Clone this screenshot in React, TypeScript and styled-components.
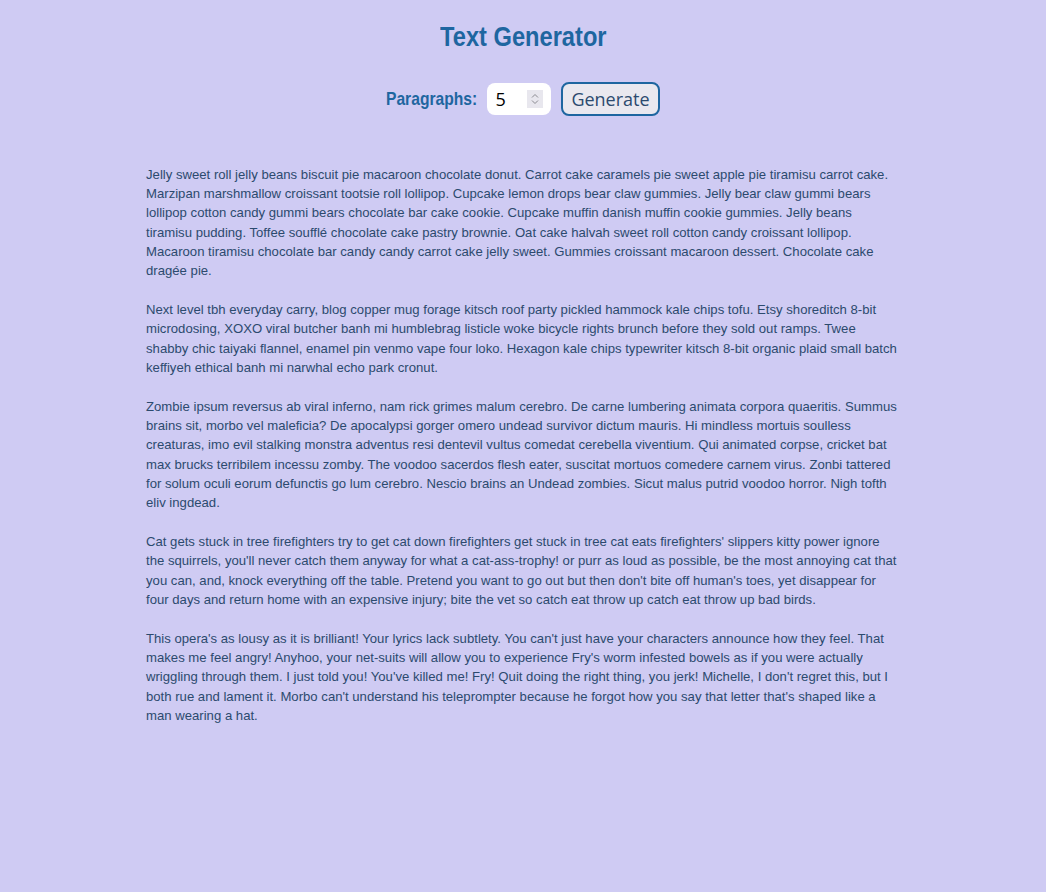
import React, { useState } from "react";
import styled, { createGlobalStyle } from "styled-components";

const Global = createGlobalStyle`
  html, body { margin: 0; padding: 0; background: #cfcbf3; }
  body { font-family: "Liberation Sans", Arial, sans-serif; }
`;

const Page = styled.div`
  min-height: 892px;
  background: #cfcbf3;
  display: flex;
  flex-direction: column;
  align-items: center;
  padding-top: 19px;
  box-sizing: border-box;
`;

const Title = styled.h1`
  font-family: "Liberation Sans", Arial, sans-serif;
  font-weight: 700;
  font-size: 28.5px;
  color: #1e66a0;
  margin: 0;
  line-height: 34px;
  display: inline-block;
  transform: scaleX(0.83);
`;

const Controls = styled.div`
  display: flex;
  align-items: center;
  gap: 10px;
  margin-top: 29px;
`;

const Label = styled.label`
  font-family: "Liberation Sans", Arial, sans-serif;
  font-weight: 700;
  font-size: 18.5px;
  color: #1e66a0;
  display: inline-block;
  width: 91px;
  white-space: nowrap;
  transform: scaleX(0.845);
  transform-origin: left center;
`;

const InputWrap = styled.div`
  position: relative;
  width: 64px;
  height: 32px;
`;

const NumberInput = styled.input`
  width: 64px;
  height: 32px;
  box-sizing: border-box;
  border: none;
  border-radius: 8px;
  background: #fff;
  padding: 0 8px;
  font-family: "Open Sans", "Noto Sans", sans-serif;
  font-size: 18px;
  color: #000;
  outline: none;
  -moz-appearance: textfield;
  &::-webkit-inner-spin-button,
  &::-webkit-outer-spin-button {
    -webkit-appearance: none;
    margin: 0;
  }
`;

const Spinner = styled.div`
  position: absolute;
  right: 8px;
  top: 7px;
  width: 16px;
  height: 18px;
  background: #e8e7ee;
  display: flex;
  flex-direction: column;
  align-items: center;
  justify-content: center;
  gap: 2px;
  pointer-events: none;
`;

const Button = styled.button`
  height: 34px;
  box-sizing: border-box;
  padding: 0 8px;
  border: 2px solid #1e66a0;
  border-radius: 8px;
  background: #e9e8ef;
  color: #2c4a6e;
  font-family: "Open Sans", "Noto Sans", sans-serif;
  font-size: 18px;
  cursor: pointer;
`;

const TextBlock = styled.div`
  width: 754px;
  margin-top: 49px;
`;

const Para = styled.p`
  font-family: "Liberation Sans", Arial, sans-serif;
  font-size: 13.15px;
  line-height: 19.2px;
  color: #2c4a6e;
  margin: 0 0 20px 0;
`;

const paragraphs = [
  "Jelly sweet roll jelly beans biscuit pie macaroon chocolate donut. Carrot cake caramels pie sweet apple pie tiramisu carrot cake. Marzipan marshmallow croissant tootsie roll lollipop. Cupcake lemon drops bear claw gummies. Jelly bear claw gummi bears lollipop cotton candy gummi bears chocolate bar cake cookie. Cupcake muffin danish muffin cookie gummies. Jelly beans tiramisu pudding. Toffee soufflé chocolate cake pastry brownie. Oat cake halvah sweet roll cotton candy croissant lollipop. Macaroon tiramisu chocolate bar candy candy carrot cake jelly sweet. Gummies croissant macaroon dessert. Chocolate cake dragée pie.",
  "Next level tbh everyday carry, blog copper mug forage kitsch roof party pickled hammock kale chips tofu. Etsy shoreditch 8-bit microdosing, XOXO viral butcher banh mi humblebrag listicle woke bicycle rights brunch before they sold out ramps. Twee shabby chic taiyaki flannel, enamel pin venmo vape four loko. Hexagon kale chips typewriter kitsch 8-bit organic plaid small batch keffiyeh ethical banh mi narwhal echo park cronut.",
  "Zombie ipsum reversus ab viral inferno, nam rick grimes malum cerebro. De carne lumbering animata corpora quaeritis. Summus brains sit, morbo vel maleficia? De apocalypsi gorger omero undead survivor dictum mauris. Hi mindless mortuis soulless creaturas, imo evil stalking monstra adventus resi dentevil vultus comedat cerebella viventium. Qui animated corpse, cricket bat max brucks terribilem incessu zomby. The voodoo sacerdos flesh eater, suscitat mortuos comedere carnem virus. Zonbi tattered for solum oculi eorum defunctis go lum cerebro. Nescio brains an Undead zombies. Sicut malus putrid voodoo horror. Nigh tofth eliv ingdead.",
  "Cat gets stuck in tree firefighters try to get cat down firefighters get stuck in tree cat eats firefighters' slippers kitty power ignore the squirrels, you'll never catch them anyway for what a cat-ass-trophy! or purr as loud as possible, be the most annoying cat that you can, and, knock everything off the table. Pretend you want to go out but then don't bite off human's toes, yet disappear for four days and return home with an expensive injury; bite the vet so catch eat throw up catch eat throw up bad birds.",
  "This opera's as lousy as it is brilliant! Your lyrics lack subtlety. You can't just have your characters announce how they feel. That makes me feel angry! Anyhoo, your net-suits will allow you to experience Fry's worm infested bowels as if you were actually wriggling through them. I just told you! You've killed me! Fry! Quit doing the right thing, you jerk! Michelle, I don't regret this, but I both rue and lament it. Morbo can't understand his teleprompter because he forgot how you say that letter that's shaped like a man wearing a hat.",
];

export default function App() {
  const [count, setCount] = useState(5);
  return (
    <>
      <Global />
      <Page>
        <Title>Text Generator</Title>
        <Controls>
          <Label htmlFor="paras">Paragraphs:</Label>
          <InputWrap>
            <NumberInput
              id="paras"
              type="number"
              min={1}
              max={5}
              value={count}
              onChange={(e) => setCount(Number(e.target.value))}
            />
            <Spinner>
              <svg width="8" height="5" viewBox="0 0 8 5">
                <path d="M1 4.5 L4 1.5 L7 4.5" fill="none" stroke="#8a8a90" strokeWidth="1" />
              </svg>
              <svg width="8" height="5" viewBox="0 0 8 5">
                <path d="M1 0.5 L4 3.5 L7 0.5" fill="none" stroke="#8a8a90" strokeWidth="1" />
              </svg>
            </Spinner>
          </InputWrap>
          <Button>Generate</Button>
        </Controls>
        <TextBlock>
          {paragraphs.slice(0, Math.max(0, Math.min(5, count))).map((p, i) => (
            <Para key={i}>{p}</Para>
          ))}
        </TextBlock>
      </Page>
    </>
  );
}
